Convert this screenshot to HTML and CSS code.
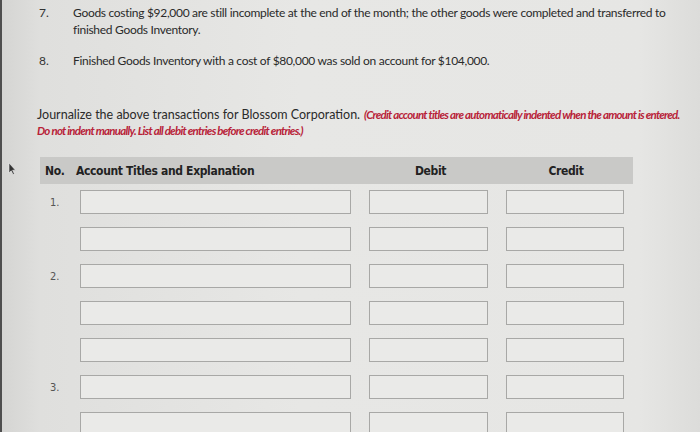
FILE: index.html
```html
<!DOCTYPE html>
<html>
<head>
<meta charset="utf-8">
<link rel="stylesheet" href="styles.css">
</head>
<body>
<div class="page">
  <ol class="steps">
    <li class="step"><span class="num">7.</span><span class="txt">Goods costing $92,000 are still incomplete at the end of the month; the other goods were completed and transferred to finished Goods Inventory.</span></li>
    <li class="step"><span class="num">8.</span><span class="txt">Finished Goods Inventory with a cost of $80,000 was sold on account for $104,000.</span></li>
  </ol>
  <div class="instr">
    <p class="line"><span class="plain">Journalize the above transactions for Blossom Corporation.</span><span class="warn">(Credit account titles are automatically indented when the amount is entered.</span></p>
    <p class="line warn">Do not indent manually. List all debit entries before credit entries.)</p>
  </div>

  <div class="tablewrap">
    <svg class="pointer" width="8" height="12" viewBox="0 0 8 12"><path d="M1 0 L1 10 L3.2 7.8 L5 11.5 L6.4 10.8 L4.6 7.2 L7.5 7.2 Z" fill="#333" stroke="#eee" stroke-width="0.6"/></svg>
    <div class="journal">
      <div class="head">
        <div class="h-no">No.</div>
        <div class="h-acct">Account Titles and Explanation</div>
        <div class="h-amt">Debit</div>
        <div class="h-amt h-credit">Credit</div>
      </div>
      <div class="row"><div class="no">1.</div><div class="box"></div><div class="box"></div><div class="box"></div></div>
      <div class="row"><div class="no"></div><div class="box"></div><div class="box"></div><div class="box"></div></div>
      <div class="row"><div class="no">2.</div><div class="box"></div><div class="box"></div><div class="box"></div></div>
      <div class="row"><div class="no"></div><div class="box"></div><div class="box"></div><div class="box"></div></div>
      <div class="row"><div class="no"></div><div class="box"></div><div class="box"></div><div class="box"></div></div>
      <div class="row"><div class="no">3.</div><div class="box"></div><div class="box"></div><div class="box"></div></div>
      <div class="row"><div class="no"></div><div class="box"></div><div class="box"></div><div class="box"></div></div>
    </div>
  </div>
</div>
</body>
</html>
```

FILE: styles.css
```css
html, body {
  margin: 0;
  padding: 0;
  height: 100%;
  overflow: hidden;
}
body {
  background: linear-gradient(90deg, #d4d4d2 0px, #dfdfdd 40px, #e7e7e5 300px, #e6e6e4 640px, #dcdcda 700px);
  font-family: Lato, "Liberation Sans", sans-serif;
  color: #2a2a2a;
}
.page {
  border-left: 2px solid #4e4e4e;
  height: 432px;
  box-sizing: border-box;
  padding-top: 4px;
}
.steps {
  list-style: none;
  margin: 0;
  padding: 0 0 0 37px;
}
.step {
  display: grid;
  grid-template-columns: 34px 600px;
  font-size: 12px;
  letter-spacing: -0.3px;
  line-height: 17px;
  margin-bottom: 14px;
}
.num { color: #333; letter-spacing: 0; }
.instr {
  margin: 38px 0 0 35px;
  font-size: 12.5px;
  line-height: 16px;
}
.line {
  margin: 0;
  white-space: nowrap;
}
.plain { margin-right: 4px; }
.warn {
  color: #b82238;
  font-style: italic;
  font-weight: 700;
  font-size: 11.5px;
  letter-spacing: -0.75px;
}
.tablewrap {
  display: flex;
  align-items: flex-start;
  margin-top: 18px;
}
.pointer {
  margin: 6px 0 0 6px;
  flex: none;
}
.journal {
  margin-left: 24px;
  width: 593px;
  font-family: "DejaVu Sans Condensed", "DejaVu Sans", Verdana, sans-serif;
}
.head {
  display: grid;
  grid-template-columns: 36px 293px 123px 141px;
  background: #c9c9c7;
  height: 27px;
  align-items: center;
  font-weight: 700;
  font-size: 12px;
  letter-spacing: -0.35px;
  color: #222;
  margin-bottom: 6px;
}
.h-no { padding-left: 5px; }
.h-amt { text-align: center; }
.h-credit { padding-left: 7px; }
.row {
  display: grid;
  grid-template-columns: 22px 271px 119px 118px;
  column-gap: 18px;
  height: 24px;
  margin-bottom: 13px;
  align-items: center;
}
.no {
  font-size: 11px;
  color: #555;
  padding-left: 10px;
  white-space: nowrap;
}
.box {
  height: 24px;
  box-sizing: border-box;
  border: 1px solid #a8a8a6;
  background: #eaeae8;
}
```
